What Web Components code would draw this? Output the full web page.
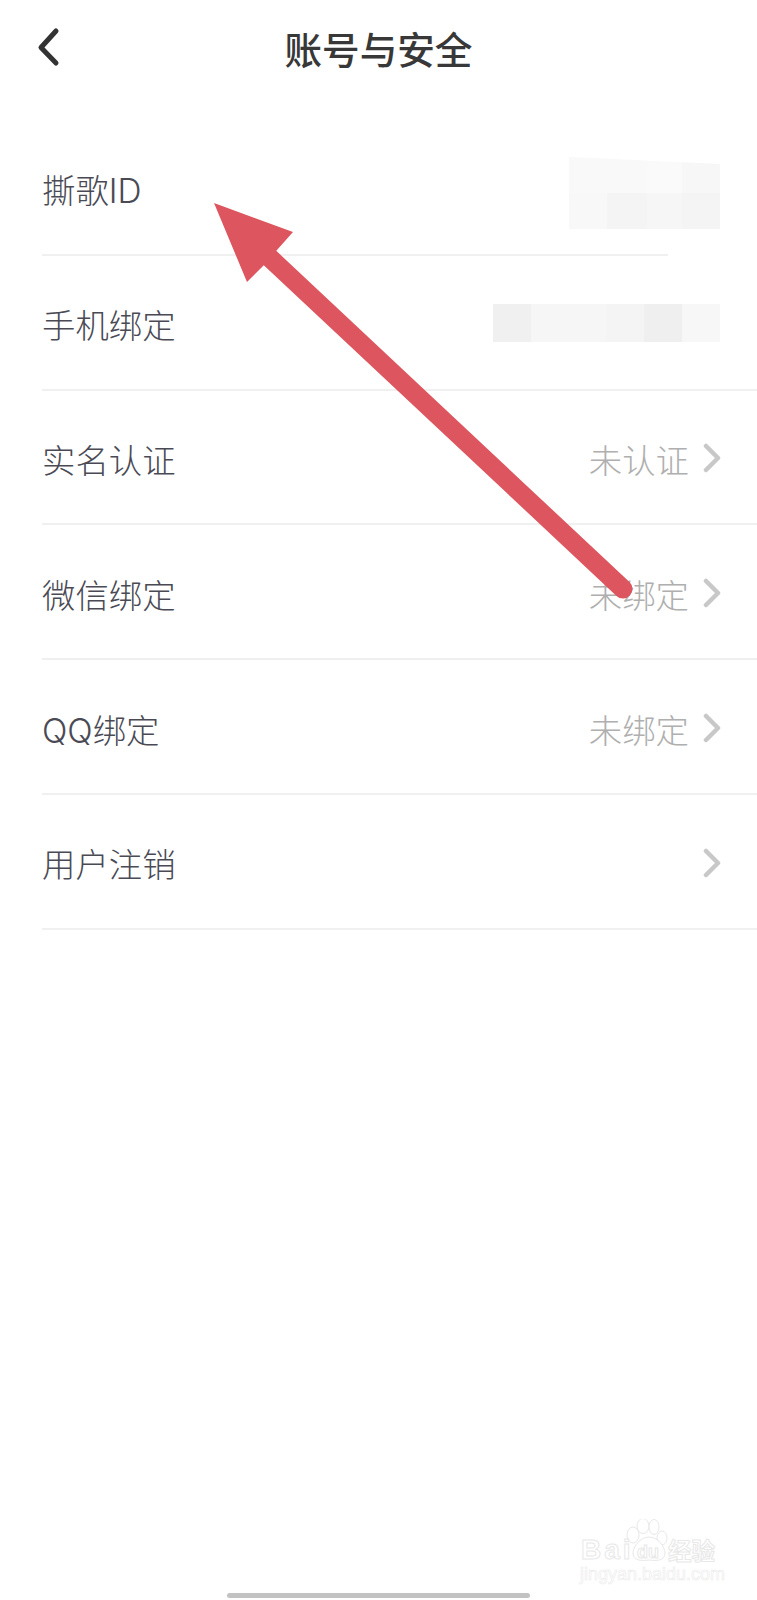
<!DOCTYPE html>
<html lang="zh-CN">
<head>
<meta charset="utf-8">
<title>账号与安全</title>
<style>
    html, body {
        margin: 0;
        background: #fff;
    }

    body {
        font-family: "Noto Sans CJK SC", "Noto Sans", sans-serif;
    }

    #page {
        position: relative;
        width: 757px;
        height: 1600px;
        overflow: hidden;
    }
</style>
</head>
<body>
<div id="page">
    <nav-bar>账号与安全</nav-bar>
    <settings-list>
        <setting-row label="撕歌ID" rule-end="625px">
            <blur-block style="--h: 72px; --cols: 38px 40px 35px 38px; --top: 14px; --nudge: 8px; --slant: polygon(0 0, 100% 10%, 100% 100%, 0 100%)"
                tones="#f9f9f9 #f9f9f9 #fafafa #f7f7f7 #f8f8f8 #f4f4f4 #f6f6f6 #f4f4f4"></blur-block>
        </setting-row>
        <setting-row label="手机绑定">
            <blur-block style="--h: 38px; --cols: repeat(6, 1fr); --w: 227px; --nudge: -2px"
                tones="#f0f0f0 #f6f6f6 #f6f6f6 #f4f4f4 #efefef #f7f7f7"></blur-block>
        </setting-row>
        <setting-row label="实名认证" link>未认证</setting-row>
        <setting-row label="微信绑定" link>未绑定</setting-row>
        <setting-row label="QQ绑定" link>未绑定</setting-row>
        <setting-row label="用户注销" link></setting-row>
    </settings-list>
    <red-arrow></red-arrow>
    <baidu-mark></baidu-mark>
    <home-bar></home-bar>
</div>

<script>
class NavBar extends HTMLElement {
    constructor() {
        super();
        this.attachShadow({mode: "open"}).innerHTML = `
            <style>
                :host {
                    display: flex;
                    align-items: center;
                    justify-content: center;
                    position: relative;
                    height: 95px;
                    margin-bottom: 26px;
                    font-size: 37.6px;
                    font-weight: 500;
                    color: #383838;
                }
                svg {
                    position: absolute;
                    left: 36px;
                    top: 27px;
                }
            </style>
            <svg width="24" height="40" viewBox="0 0 24 40">
                <path d="M20 4 L5 20.5 L20 36" fill="none" stroke="#333" stroke-width="5" stroke-linecap="round" stroke-linejoin="round"/>
            </svg>
            <slot></slot>
        `;
    }
}

class SettingsList extends HTMLElement {
    constructor() {
        super();
        this.attachShadow({mode: "open"}).innerHTML = `
            <style>
                :host {
                    display: flex;
                    flex-direction: column;
                }
            </style>
            <slot></slot>
        `;
    }
}

class SettingRow extends HTMLElement {
    constructor() {
        super();
        const chevron = this.hasAttribute("link") ? `
            <svg width="18" height="30" viewBox="0 0 18 30">
                <path d="M3 3 L15 15 L3 27" fill="none" stroke="#c8c8c8" stroke-width="4.5" stroke-linecap="round" stroke-linejoin="round"/>
            </svg>` : "";
        // the first rule stops short in the reference, it was painted over
        const end = this.getAttribute("rule-end") || "100%";
        this.attachShadow({mode: "open"}).innerHTML = `
            <style>
                :host {
                    display: flex;
                    align-items: center;
                    justify-content: space-between;
                    box-sizing: border-box;
                    height: 134.8px;
                    margin-left: 42px;
                    padding-right: 36px;
                    padding-top: 3px;
                    border-bottom: 2px solid #f0f0f0;
                    border-image: linear-gradient(to right, #f0f0f0 ${end}, transparent ${end}) 1;
                    font-family: Inter, "Noto Sans CJK SC", sans-serif;
                    font-size: 33.4px;
                    font-weight: 300;
                    color: #4a4a55;
                }
                #value {
                    display: flex;
                    align-items: center;
                    gap: 14px;
                    color: #afafaf;
                }
            </style>
            <span>${this.getAttribute("label")}</span>
            <div id="value"><slot></slot>${chevron}</div>
        `;
    }
}

class BlurBlock extends HTMLElement {
    constructor() {
        super();
        const tiles = this.getAttribute("tones").split(" ")
            .map(c => `<i style="background: ${c}"></i>`).join("");
        this.attachShadow({mode: "open"}).innerHTML = `
            <style>
                :host {
                    display: grid;
                    grid-template-columns: var(--cols);
                    width: var(--w, auto);
                    height: var(--h);
                    margin-top: var(--nudge, 0);
                    margin-right: 1px;
                    clip-path: var(--slant, none);
                }
            </style>
            ${tiles}
        `;
    }
}

class RedArrow extends HTMLElement {
    constructor() {
        super();
        this.attachShadow({mode: "open"}).innerHTML = `
            <style>
                :host {
                    position: absolute;
                    left: 0;
                    top: 0;
                }
                svg {
                    display: block;
                }
            </style>
            <svg width="757" height="1600" viewBox="0 0 757 1600">
                <path d="M270 258 L623 589" stroke="#dd565f" stroke-width="19" stroke-linecap="round" fill="none"/>
                <path d="M214 203 L293 232 L277 250 L264 265 L247 282 Z" fill="#dd565f"/>
            </svg>
        `;
    }
}

class BaiduMark extends HTMLElement {
    constructor() {
        super();
        this.attachShadow({mode: "open"}).innerHTML = `
            <style>
                :host {
                    position: absolute;
                    left: 580px;
                    top: 1514px;
                    width: 140px;
                    height: 70px;
                    font-family: "Liberation Sans", "Noto Sans CJK SC", sans-serif;
                    color: #fff;
                    -webkit-text-stroke: 1px #e8e8e8;
                }
                svg {
                    position: absolute;
                    left: 45px;
                    top: 5px;
                }
                span {
                    position: absolute;
                    white-space: nowrap;
                }
                #bai {
                    left: 1px;
                    top: 20px;
                    font-size: 28px;
                    font-weight: 700;
                    letter-spacing: 3px;
                }
                #du {
                    left: 57px;
                    top: 28px;
                    font-size: 18px;
                    font-weight: 700;
                }
                #jing {
                    left: 88px;
                    top: 19px;
                    font-size: 23.5px;
                    font-weight: 700;
                    font-family: "Noto Sans CJK SC", sans-serif;
                }
                #site {
                    left: 0;
                    top: 50px;
                    font-size: 18px;
                    -webkit-text-stroke: .6px #ececec;
                }
            </style>
            <svg width="50" height="46" viewBox="0 0 50 46" fill="#fff" stroke="#e8e8e8" stroke-width="1">
                <ellipse cx="8" cy="16" rx="6" ry="8"/>
                <ellipse cx="18" cy="7" rx="6" ry="7.5"/>
                <ellipse cx="29" cy="8" rx="5" ry="7.5"/>
                <ellipse cx="37" cy="19" rx="5" ry="7"/>
                <path d="M24 18 C15 18 8 28 8 34 C8 42 17 42 24 41 C31 42 40 42 40 34 C40 28 33 18 24 18 Z"/>
            </svg>
            <span id="bai">Bai</span>
            <span id="du">du</span>
            <span id="jing">经验</span>
            <span id="site">jingyan.baidu.com</span>
        `;
    }
}

class HomeBar extends HTMLElement {
    constructor() {
        super();
        this.attachShadow({mode: "open"}).innerHTML = `
            <style>
                :host {
                    position: absolute;
                    left: 227px;
                    top: 1593px;
                    width: 303px;
                    height: 5px;
                    border-radius: 3px;
                    background: #c2c2c2;
                }
            </style>
        `;
    }
}

customElements.define("nav-bar", NavBar);
customElements.define("settings-list", SettingsList);
customElements.define("setting-row", SettingRow);
customElements.define("blur-block", BlurBlock);
customElements.define("red-arrow", RedArrow);
customElements.define("baidu-mark", BaiduMark);
customElements.define("home-bar", HomeBar);
</script>
</body>
</html>
